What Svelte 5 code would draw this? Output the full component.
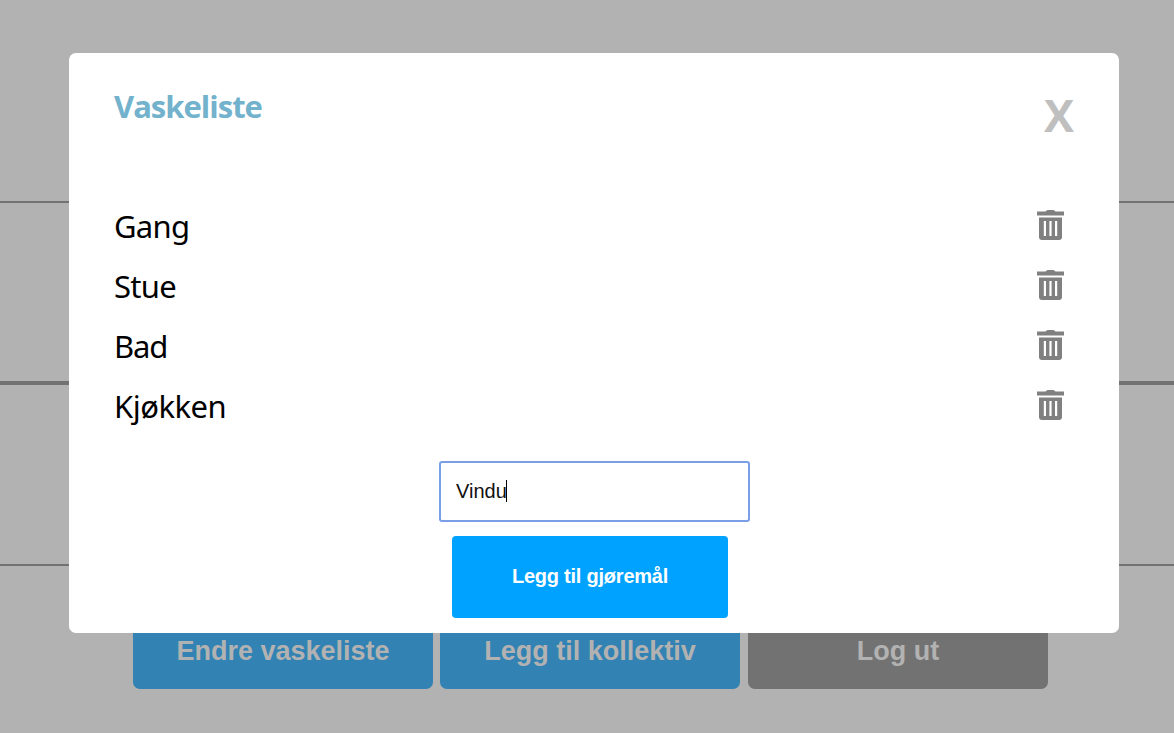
<script>
  const tasks = [
    { name: 'Gang', spacing: -0.7 },
    { name: 'Stue', spacing: -0.7 },
    { name: 'Bad', spacing: -1.2 },
    { name: 'Kjøkken', spacing: -0.5 }
  ];
  let draft = 'Vindu';
</script>

<div class="screen">
  <main class="page">
    <section class="band first"></section>
    <section class="band second"></section>
    <section class="band third"></section>
    <div class="actions">
      <button class="action">Endre vaskeliste</button>
      <button class="action">Legg til kollektiv</button>
      <button class="action logout">Log ut</button>
    </div>
  </main>

  <div class="modal">
    <header>
      <h2>Vaskeliste</h2>
      <button class="close">X</button>
    </header>
    <ul>
      {#each tasks as task}
        <li>
          <span class="name" style="letter-spacing: {task.spacing}px">{task.name}</span>
          <svg width="27" height="30" viewBox="0 0 27 30" fill="#808080">
            <path d="M0 1.6H8.5Q9.3 0 11 0H16Q17.7 0 18.5 1.6H27V5.5H0Z" />
            <path fill-rule="evenodd" d="M2 7.5H25V27Q25 30 22 30H5Q2 30 2 27ZM6.8 11V26H9V11ZM12.4 11V26H14.6V11ZM18 11V26H20.2V11Z" />
          </svg>
        </li>
      {/each}
    </ul>
    <div class="field"><span>{draft}</span><i class="caret"></i></div>
    <button class="add">Legg til gjøremål</button>
  </div>
</div>

<style>
  :global(body) { margin: 0; background: #b2b2b2; }
  .screen { position: relative; width: 1174px; height: 733px; overflow: hidden; background: #b2b2b2; }
  button { border: 0; padding: 0; font-family: "Liberation Sans", Arial, sans-serif; font-weight: 700; }
  .band { box-sizing: border-box; border-bottom: 2px solid #727272; }
  .first { height: 203px; }
  .second { height: 182px; border-bottom-width: 4px; }
  .third { height: 181px; }
  .actions { display: flex; gap: 7px; padding: 47px 0 0 133px; }
  .action { width: 300px; height: 76px; border-radius: 7px; background: #3283b3; color: #b2b2b2; font-size: 27px; line-height: 76px; }
  .logout { margin-left: 1px; background: #727272; }
  .modal { position: absolute; left: 69px; top: 53px; width: 1050px; height: 580px; box-sizing: border-box; padding: 0 45px; border-radius: 7px; background: #fff; display: flex; flex-direction: column; }
  header { display: flex; justify-content: space-between; height: 144px; }
  h2 { margin: 31px 0 0; font: 700 31px/44px "Open Sans", sans-serif; letter-spacing: -1px; color: #73b2cc; }
  .close { margin-top: 32px; height: 60px; background: none; color: #bfbfbf; font: 700 45px/60px "Open Sans", sans-serif; }
  ul { list-style: none; margin: 0; padding: 0; }
  li { display: flex; justify-content: space-between; height: 60px; padding-right: 10px; }
  .name { font: 400 31px/58px "Noto Sans", sans-serif; color: #000; }
  svg { margin-top: 13px; }
  .field { box-sizing: border-box; width: 311px; height: 61px; margin: 24px 0 0 325px; padding: 0 0 2px 15px; border: 2px solid #7b9fe6; border-radius: 3px; display: flex; align-items: center; font: 20px/24px "Liberation Sans", Arial, sans-serif; color: #111; }
  .caret { width: 1px; height: 22px; margin-left: -1px; background: #000; }
  .add { width: 276px; height: 82px; margin: 14px 0 0 338px; padding-bottom: 2px; border-radius: 4px; background: #00a2ff; color: #fff; font-size: 20px; letter-spacing: -0.23px; }
</style>
